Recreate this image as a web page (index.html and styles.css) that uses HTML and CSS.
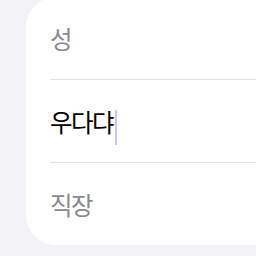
FILE: index.html
```html
<!DOCTYPE html>
<html lang="ko">
<head>
<meta charset="utf-8">
<link rel="stylesheet" href="styles.css">
</head>
<body>
<div class="card">
  <div class="row"><span class="ph">성</span></div>
  <div class="row"><span class="val">우다댜</span><span class="caret"></span></div>
  <div class="row last"><span class="ph">직장</span></div>
</div>
</body>
</html>
```
FILE: styles.css
```css
html, body {
  margin: 0;
  padding: 0;
  background: #f2f2f7;
  width: 256px;
  height: 256px;
  overflow: hidden;
}
body {
  font-family: "Noto Sans CJK KR", "Noto Sans", sans-serif;
}
.card {
  margin: -3px 0 0 26px;
  width: 230px;
  box-sizing: border-box;
  background: #ffffff;
  border-radius: 30px 0 0 30px;
  padding-left: 24px;
}
.row {
  height: 82px;
  display: flex;
  align-items: center;
  border-bottom: 1px solid #e3e3e8;
  font-size: 24.5px;
  font-weight: 400;
  letter-spacing: -1.5px;
}
.row.last {
  border-bottom: none;
}
.ph {
  color: #8a8a8e;
}
.val {
  color: #000000;
}
.caret {
  width: 2px;
  height: 35px;
  background: #c9c8f2;
  margin-left: 2px;
  margin-top: 12px;
}
```
